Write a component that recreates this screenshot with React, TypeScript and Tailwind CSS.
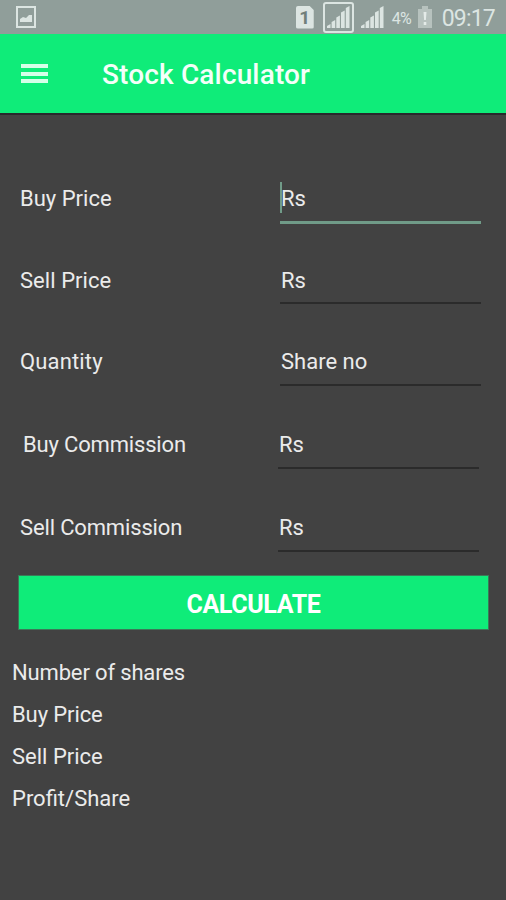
import React from 'react';
import clsx from 'clsx';

interface FieldProps {
  label: string;
  hint: string;
  focused?: boolean;
  rowClass: string;
  labelClass: string;
  inputClass: string;
}

const fields: FieldProps[] = [
  { label: 'Buy Price', hint: 'Rs', focused: true, rowClass: 'mt-[61px] leading-[46px]', labelClass: 'pl-5', inputClass: 'ml-[280px]' },
  { label: 'Sell Price', hint: 'Rs', rowClass: 'mt-8 leading-[50px]', labelClass: 'pl-5 tracking-[0.05px]', inputClass: 'ml-[280px]' },
  { label: 'Quantity', hint: 'Share no', rowClass: 'mt-[34px] leading-[48px]', labelClass: 'pl-5 tracking-[0.15px]', inputClass: 'ml-[280px]' },
  { label: 'Buy Commission', hint: 'Rs', rowClass: 'mt-[35px] leading-[48px]', labelClass: 'pl-[23px] tracking-[-0.17px]', inputClass: 'ml-[278px]' },
  { label: 'Sell Commission', hint: 'Rs', rowClass: 'mt-[35px] leading-[48px]', labelClass: 'pl-5 tracking-[-0.15px]', inputClass: 'ml-[278px]' },
];

const results = [
  { label: 'Number of shares', className: 'tracking-[-0.15px]' },
  { label: 'Buy Price', className: 'tracking-[-0.1px]' },
  { label: 'Sell Price', className: '' },
  { label: 'Profit/Share', className: '' },
];

const SignalIcon = () => (
  <svg width="23" height="23" viewBox="0 0 23 23" fill="currentColor">
    <path d="M0 20l3.500-2v4H0zM4.600 16l3.600-2v8H4.600zM9.300 11.500l3.600-2V22H9.300zM14 6.500l3.700-2V22H14zM18.800 2l3.700-2v22h-3.700z" />
  </svg>
);

const StatusBar: React.FC = () => (
  <div className="flex h-[34px] items-center bg-[#909e9a] pl-4 pr-[11px] text-[#dce5e2]">
    <svg width="20" height="22" viewBox="0 0 20 22" fill="none">
      <rect x="1" y="1" width="18" height="20" stroke="currentColor" strokeWidth="2" />
      <path d="M4 16v-3l3-2 3 1 3-3h3v7z" fill="currentColor" />
    </svg>
    <div className="ml-auto flex items-center">
      <div className="flex h-[23px] w-[18px] items-center justify-center rounded-[2px] bg-[#dce5e2] text-[19px] font-bold leading-none text-[#71807b] [clip-path:polygon(0_0,75%_0,100%_20%,100%_100%,0_100%)]">
        1
      </div>
      <div className="ml-[9px] flex h-[31px] w-[31px] items-center justify-center rounded-[3px] border-2 border-[#dce5e2]">
        <SignalIcon />
      </div>
      <div className="ml-[7px]">
        <SignalIcon />
      </div>
      <span className="ml-2 w-[22px] whitespace-nowrap pt-[3px] text-[16px] leading-none tracking-[-0.6px]">4%</span>
      <svg className="ml-1" width="14" height="22" viewBox="0 0 14 22">
        <path d="M4 0h6v3h4v19H0V3h4z" fill="#b7c2be" />
        <path d="M5.500 6h3l-.6 8H6.100zM5.700 16h2.600v3H5.700z" fill="#e4ebe8" />
      </svg>
      <span className="ml-2.5 pt-[2px] text-[23px] leading-none tracking-[-0.8px]">09:17</span>
    </div>
  </div>
);

const Field: React.FC<FieldProps> = ({ label, hint, focused, rowClass, labelClass, inputClass }) => (
  <div className={clsx('grid h-12 grid-rows-[48px]', rowClass)}>
    <label className={clsx('col-start-1 row-start-1', labelClass)}>{label}</label>
    <div
      className={clsx(
        'relative col-start-1 row-start-1 h-12 w-[201px] pl-px',
        focused ? 'border-b-[3px] border-[#709b88]' : 'border-b-2 border-[#2b2b2b]',
        inputClass
      )}
    >
      {focused && <span className="absolute left-0 top-1.5 h-[31px] w-[2px] bg-[#709b88]" />}
      {hint}
    </div>
  </div>
);

export default function App() {
  return (
    <div className="h-[900px] w-[506px] overflow-hidden bg-[#424242] font-[Roboto,sans-serif] text-[22px] text-[#ebebeb]">
      <StatusBar />
      <header className="flex h-[81px] items-center border-b-2 border-[#29292d] bg-[#0fec79] pl-[21px] text-[#f4fff9]">
        <button className="flex flex-col gap-[3.5px]" aria-label="Open menu">
          <span className="h-1 w-[27px] bg-[#d5ffe8]" />
          <span className="h-1 w-[27px] bg-[#d5ffe8]" />
          <span className="h-1 w-[27px] bg-[#d5ffe8]" />
        </button>
        <h1 className="ml-[54px] pt-[3px] text-[28px] font-medium leading-none tracking-[0.15px]">Stock Calculator</h1>
      </header>
      <main>
        {fields.map((field) => (
          <Field key={field.label} {...field} />
        ))}
        <button className="ml-[18px] mt-[23px] flex h-[55px] w-[471px] items-center justify-center border border-[#3b7958] bg-[#0fec79] pt-[3px] text-[25px] font-bold leading-none tracking-[-0.35px] text-white">
          CALCULATE
        </button>
        <ul className="mt-[22px] pl-3">
          {results.map(({ label, className }) => (
            <li key={label} className={clsx('h-[42px] leading-[42px]', className)}>
              {label}
            </li>
          ))}
        </ul>
      </main>
    </div>
  );
}
